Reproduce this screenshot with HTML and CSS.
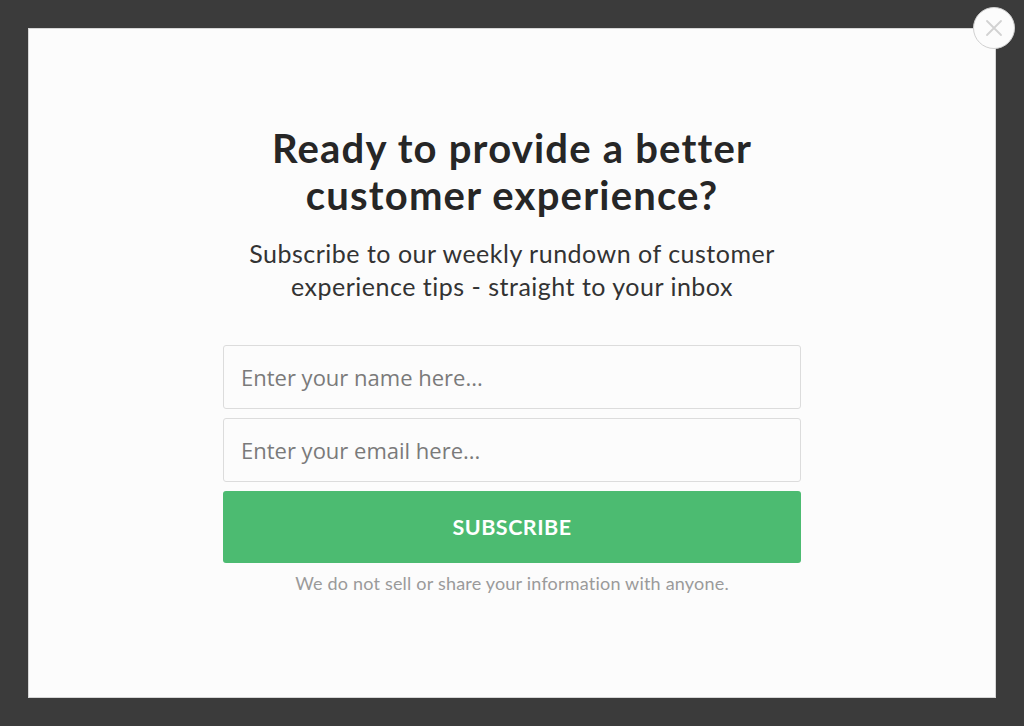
FILE: index.html
```html
<!DOCTYPE html>
<html lang="en">
<head>
    <meta charset="UTF-8">
    <meta name="viewport" content="width=device-width, initial-scale=1.0">
    <title>Newsletter signup</title>
    <link rel="stylesheet" href="styles.css">
</head>
<body>

    <div class="overlay">
        <div class="modal">
            <button class="close-btn" aria-label="Close">
                <svg width="20" height="20" viewBox="0 0 20 20">
                    <path d="M3 3 L17 17 M17 3 L3 17" stroke="#d2d2d2" stroke-width="1.8" stroke-linecap="round" fill="none"/>
                </svg>
            </button>

            <div class="signup">
                <h1>Ready to provide a better customer experience?</h1>
                <p class="lead">Subscribe to our weekly rundown of customer experience tips - straight to your inbox</p>

                <form class="signup-form" onsubmit="return false">
                    <input type="text" placeholder="Enter your name here...">
                    <input type="email" placeholder="Enter your email here...">
                    <button type="submit" class="subscribe-btn">SUBSCRIBE</button>
                </form>

                <p class="note">We do not sell or share your information with anyone.</p>
            </div>
        </div>
    </div>

</body>
</html>
```

FILE: styles.css
```css
/* Page */
body {
    margin: 0;
    background: #3b3b3b;
    font-family: "Open Sans", "Liberation Sans", sans-serif;
}

.overlay {
    height: 726px;
    padding: 28px;
    box-sizing: border-box;
}

/* Modal */
.modal {
    position: relative;
    width: 968px;
    height: 670px;
    background: #fcfcfc;
    border: 1px solid #d6d6d6;
    box-sizing: border-box;
    display: flex;
    justify-content: center;
}

.close-btn {
    position: absolute;
    top: -22px;
    right: -20px;
    width: 42px;
    height: 42px;
    border-radius: 50%;
    border: 1px solid #d0d0d0;
    background: #fcfcfc;
    display: flex;
    align-items: center;
    justify-content: center;
    padding: 0;
    cursor: pointer;
}

/* Content */
.signup {
    width: 578px;
    padding-top: 96px;
    text-align: center;
}

.signup h1 {
    margin: 0 auto;
    width: 560px;
    font-family: "Lato", sans-serif;
    font-weight: 700;
    font-size: 40px;
    line-height: 47px;
    letter-spacing: 1.2px;
    color: #262626;
}

.lead {
    margin: 18px -20px 0;
    font-family: "Lato", sans-serif;
    font-size: 25px;
    line-height: 33px;
    letter-spacing: 0.5px;
    color: #333;
}

.signup-form {
    margin-top: 42px;
    display: flex;
    flex-direction: column;
    gap: 9px;
}

.signup-form input {
    height: 64px;
    padding: 0 17px;
    border: 1px solid #dcdcdc;
    border-radius: 3px;
    background: #fcfcfc;
    font-family: "Open Sans", sans-serif;
    font-size: 22px;
    color: #333;
    box-sizing: border-box;
}

.signup-form input::placeholder {
    color: #7a7a7a;
}

.subscribe-btn {
    height: 72px;
    border: none;
    border-radius: 3px;
    background: #4cbb71;
    color: white;
    font-family: "Lato", sans-serif;
    font-weight: 700;
    font-size: 21.5px;
    letter-spacing: 0.5px;
    cursor: pointer;
}

.note {
    margin: 9px 0 0;
    font-family: "Lato", sans-serif;
    font-size: 18px;
    letter-spacing: 0.2px;
    color: #9a9a9a;
}
```
